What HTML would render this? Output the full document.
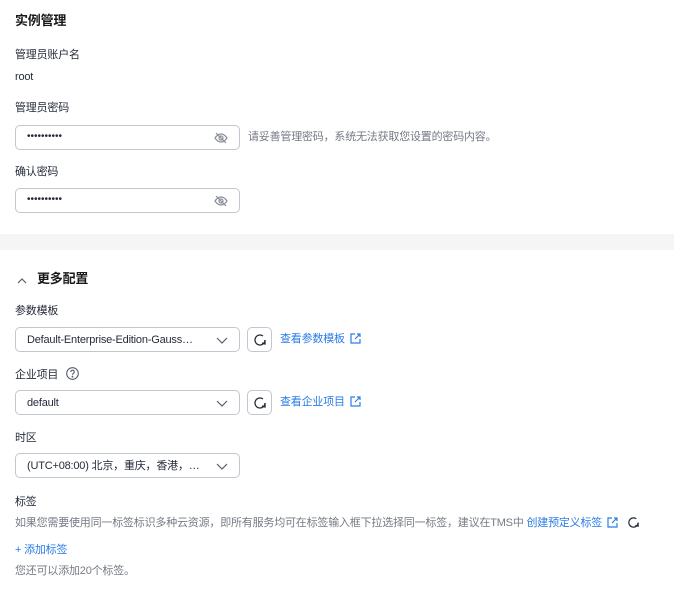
<!DOCTYPE html>
<html><head><meta charset="utf-8"><style>
*{margin:0;padding:0;box-sizing:border-box}
body{width:674px;height:593px;background:#fff;font-family:"Liberation Sans","Noto Sans CJK SC",sans-serif;font-size:11px;letter-spacing:-0.2px;color:#252b3a;position:relative;overflow:hidden}
.a{position:absolute;white-space:nowrap;line-height:16px}
.h{font-size:13px;font-weight:bold;color:#191919}
.box{position:absolute;left:15px;width:225px;height:25px;border:1px solid #c2c6cf;border-radius:5px;background:#fff}
.box .t{position:absolute;left:11px;top:4px;line-height:16px;color:#252b3a}
.btn{position:absolute;left:247px;width:25px;height:25px;border:1px solid #c2c6cf;border-radius:5px}
.link{color:#2a7ce6}
.g{color:#757a84}
svg{position:absolute}
</style></head><body>
<div class="a h" style="left:15px;top:13px">实例管理</div>
<div class="a" style="left:15px;top:47px">管理员账户名</div>
<div class="a" style="left:15px;top:69px">root</div>
<div class="a" style="left:15px;top:100px">管理员密码</div>
<div class="box" style="top:125px"><span class="t" style="top:3px;font-size:10px;letter-spacing:0">••••••••••</span>
<svg style="left:198px;top:5px" width="14" height="14" viewBox="0 0 14 14" fill="none" stroke="#8a8e99" stroke-width="1.2"><path d="M1 7c2-3 4-4 6-4s4 1 6 4c-2 3-4 4-6 4S3 10 1 7z"/><circle cx="7" cy="7" r="2"/><path d="M2 2l10 10"/></svg></div>
<div class="a g" style="left:248px;top:129px">请妥善管理密码，系统无法获取您设置的密码内容。</div>
<div class="a" style="left:15px;top:164px">确认密码</div>
<div class="box" style="top:188px"><span class="t" style="top:3px;font-size:10px;letter-spacing:0">••••••••••</span>
<svg style="left:198px;top:5px" width="14" height="14" viewBox="0 0 14 14" fill="none" stroke="#8a8e99" stroke-width="1.2"><path d="M1 7c2-3 4-4 6-4s4 1 6 4c-2 3-4 4-6 4S3 10 1 7z"/><circle cx="7" cy="7" r="2"/><path d="M2 2l10 10"/></svg></div>
<div style="position:absolute;left:0;top:234px;width:674px;height:16px;background:#f5f5f5"></div>
<svg style="left:17px;top:277px" width="10" height="7" viewBox="0 0 10 7" fill="none" stroke="#575d6c" stroke-width="1.2"><path d="M1 6l4-4 4 4"/></svg>
<div class="a h" style="left:37px;top:271px">更多配置</div>
<div class="a" style="left:15px;top:303px">参数模板</div>
<div class="box" style="top:327px"><span class="t">Default-Enterprise-Edition-Gauss…</span>
<svg style="left:200px;top:9px" width="12" height="7" viewBox="0 0 12 7" fill="none" stroke="#575d6c" stroke-width="1.2"><path d="M1 1l5 5 5-5"/></svg></div>
<div class="btn" style="top:327px"><svg style="left:5px;top:5px" width="14" height="14" viewBox="0 0 14 14" fill="none" stroke="#252b3a" stroke-width="1.3"><path d="M12 7a5 5 0 1 1-2-4"/><path d="M12 7v4l-3-1"/></svg></div>
<div class="a link" style="left:280px;top:331px">查看参数模板</div>
<svg style="left:350px;top:333px" width="11" height="11" viewBox="0 0 11 11" fill="none" stroke="#2a7ce6" stroke-width="1.2"><path d="M5 1H1v9h9V6M7 1h3v3M10 1L5 6"/></svg>
<div class="a" style="left:15px;top:367px">企业项目</div>
<svg style="left:66px;top:367px" width="13" height="13" viewBox="0 0 13 13" fill="none" stroke="#575d6c" stroke-width="1.1"><circle cx="6.5" cy="6.5" r="5.8"/><path d="M4.8 5a1.7 1.7 0 1 1 2.4 1.5c-.6.3-.7.7-.7 1.3"/><circle cx="6.5" cy="9.6" r=".4" fill="#575d6c"/></svg>
<div class="box" style="top:390px"><span class="t">default</span>
<svg style="left:200px;top:9px" width="12" height="7" viewBox="0 0 12 7" fill="none" stroke="#575d6c" stroke-width="1.2"><path d="M1 1l5 5 5-5"/></svg></div>
<div class="btn" style="top:390px"><svg style="left:5px;top:5px" width="14" height="14" viewBox="0 0 14 14" fill="none" stroke="#252b3a" stroke-width="1.3"><path d="M12 7a5 5 0 1 1-2-4"/><path d="M12 7v4l-3-1"/></svg></div>
<div class="a link" style="left:280px;top:394px">查看企业项目</div>
<svg style="left:350px;top:396px" width="11" height="11" viewBox="0 0 11 11" fill="none" stroke="#2a7ce6" stroke-width="1.2"><path d="M5 1H1v9h9V6M7 1h3v3M10 1L5 6"/></svg>
<div class="a" style="left:15px;top:430px">时区</div>
<div class="box" style="top:453px"><span class="t">(UTC+08:00) 北京，重庆，香港，…</span>
<svg style="left:200px;top:9px" width="12" height="7" viewBox="0 0 12 7" fill="none" stroke="#575d6c" stroke-width="1.2"><path d="M1 1l5 5 5-5"/></svg></div>
<div class="a" style="left:15px;top:494px">标签</div>
<div class="a g" style="left:15px;top:515px">如果您需要使用同一标签标识多种云资源，即所有服务均可在标签输入框下拉选择同一标签，建议在TMS中 <span class="link">创建预定义标签</span></div>
<svg style="left:607px;top:517px" width="11" height="11" viewBox="0 0 11 11" fill="none" stroke="#2a7ce6" stroke-width="1.2"><path d="M5 1H1v9h9V6M7 1h3v3M10 1L5 6"/></svg>
<svg style="left:627px;top:516px" width="13" height="13" viewBox="0 0 14 14" fill="none" stroke="#252b3a" stroke-width="1.3"><path d="M12 7a5 5 0 1 1-2-4"/><path d="M12 7v4l-3-1"/></svg>
<div class="a link" style="left:15px;top:542px">+ 添加标签</div>
<div class="a g" style="left:15px;top:563px">您还可以添加20个标签。</div>
</body></html>
